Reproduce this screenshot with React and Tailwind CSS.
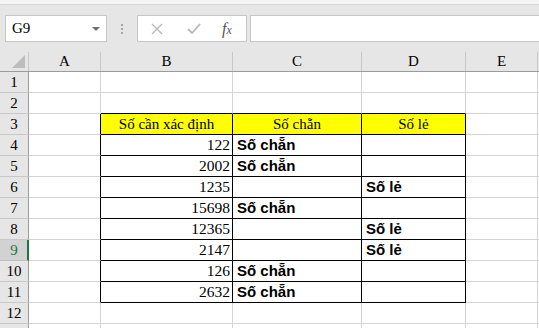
import React from 'react';

const COLS = [
  { key: 'A', w: 'w-[72px]' },
  { key: 'B', w: 'w-[132px]' },
  { key: 'C', w: 'w-[129px]' },
  { key: 'D', w: 'w-[104px]' },
  { key: 'E', w: 'w-[72px]' },
];

const DATA = {
  4: ['122', 'Số chẵn', ''],
  5: ['2002', 'Số chẵn', ''],
  6: ['1235', '', 'Số lẻ'],
  7: ['15698', 'Số chẵn', ''],
  8: ['12365', '', 'Số lẻ'],
  9: ['2147', '', 'Số lẻ'],
  10: ['126', 'Số chẵn', ''],
  11: ['2632', 'Số chẵn', ''],
};

const HEADERS = ['Số cần xác định', 'Số chẵn', 'Số lẻ'];

function FormulaBar() {
  return (
    <div className="flex h-[46px] items-start bg-[#e6e6e6] pt-[10px]">
      <div className="ml-[5px] flex h-[27px] w-[102px] items-center justify-between border border-[#c6c6c6] bg-white pl-[6px] pr-[6px]">
        <span className="font-['Liberation_Serif',serif] text-[15px] text-black">G9</span>
        <span className="h-0 w-0 border-l-[4px] border-r-[4px] border-t-[4px] border-l-transparent border-r-transparent border-t-[#6f6f6f]" />
      </div>
      <div className="flex h-[27px] w-[30px] flex-col items-center justify-center gap-[2px]">
        <span className="h-[2px] w-[2px] bg-[#a6a6a6]" />
        <span className="h-[2px] w-[2px] bg-[#a6a6a6]" />
        <span className="h-[2px] w-[2px] bg-[#a6a6a6]" />
      </div>
      <div className="flex h-[27px] w-[110px] items-center border border-[#c6c6c6] bg-white">
        <svg width="12" height="12" viewBox="0 0 12 12" className="ml-[13px]">
          <path d="M1 1 L11 11 M11 1 L1 11" stroke="#b8b8b8" strokeWidth="1.4" fill="none" />
        </svg>
        <svg width="14" height="12" viewBox="0 0 14 12" className="ml-[24px]">
          <path d="M1 6 L5 10 L13 1" stroke="#b8b8b8" strokeWidth="1.8" fill="none" />
        </svg>
        <span className="ml-[21px] font-['Liberation_Serif',serif] text-[16px] italic leading-none text-[#555]">
          f<span className="text-[12px]">x</span>
        </span>
      </div>
      <div className="ml-[3px] h-[27px] flex-1 border-y border-l border-[#c6c6c6] bg-white" />
    </div>
  );
}

function ColumnHeader() {
  return (
    <div className="flex h-[21px] border-b border-[#9b9b9b] bg-[#e6e6e6] font-['Liberation_Serif',serif] text-[15px] text-black">
      <div className="relative mt-[1px] w-[29px] border-r border-[#c8c8c8]">
        <span className="absolute bottom-[3px] right-[3px] h-0 w-0 border-b-[13px] border-l-[13px] border-b-[#bdbdbd] border-l-transparent" />
      </div>
      {COLS.map((c) => (
        <div key={c.key} className={`${c.w} mt-[1px] flex items-center justify-center border-r border-[#c8c8c8]`}>
          {c.key}
        </div>
      ))}
      <div className="flex-1" />
    </div>
  );
}

function cellBorder(row, col) {
  const inTable = row >= 3 && row <= 11;
  const right =
    (inTable && col >= 0 && col <= 3) ? 'border-r-black' : 'border-r-[#d4d4d4]';
  const bottom =
    ((row >= 2 && row <= 11) && col >= 1 && col <= 3) ? 'border-b-black' : 'border-b-[#d4d4d4]';
  return `border-r border-b ${right} ${bottom}`;
}

function Row({ n, label = true }) {
  const selected = n === 9;
  const values = DATA[n];
  return (
    <div className="flex h-[21px]">
      <div
        className={
          selected
            ? 'flex w-[29px] items-center justify-center border-b border-r-2 border-b-[#c0c0c0] border-r-[#217346] bg-[#d2d2d2] pl-[1px] font-[\'Liberation_Serif\',serif] text-[15px] text-[#217346]'
            : 'flex w-[29px] items-center justify-center border-b border-r border-b-[#c8c8c8] border-r-[#9b9b9b] bg-[#e6e6e6] font-[\'Liberation_Serif\',serif] text-[15px] text-black'
        }
      >
        {label ? n : null}
      </div>
      {COLS.map((c, i) => {
        let content = null;
        let cls = '';
        if (n === 3 && i >= 1 && i <= 3) {
          content = HEADERS[i - 1];
          cls = "bg-[#ffff00] justify-center font-['Liberation_Serif',serif] text-[15px]";
        } else if (values && i === 1) {
          content = values[0];
          cls = "justify-end pr-[2px] font-['Liberation_Serif',serif] text-[15.5px]";
        } else if (values && (i === 2 || i === 3)) {
          content = values[i - 1];
          cls = "justify-start pl-[4px] font-['Liberation_Sans',sans-serif] text-[15px] font-bold";
        }
        return (
          <div key={c.key} className={`${c.w} flex items-end pb-[1px] leading-[18px] text-black ${cellBorder(n, i)} ${cls}`}>
            {content}
          </div>
        );
      })}
      <div className="flex-1 border-b border-[#d4d4d4]" />
    </div>
  );
}

export default function App() {
  const rows = Array.from({ length: 12 }, (_, i) => i + 1);
  return (
    <div className="h-[328px] w-[539px] overflow-hidden bg-white">
      <div className="h-[5px] border-b border-[#d6d6d6] bg-[#f4f4f4]" />
      <FormulaBar />
      <ColumnHeader />
      {rows.map((n) => (
        <Row key={n} n={n} />
      ))}
      <Row n={13} label={false} />
    </div>
  );
}
